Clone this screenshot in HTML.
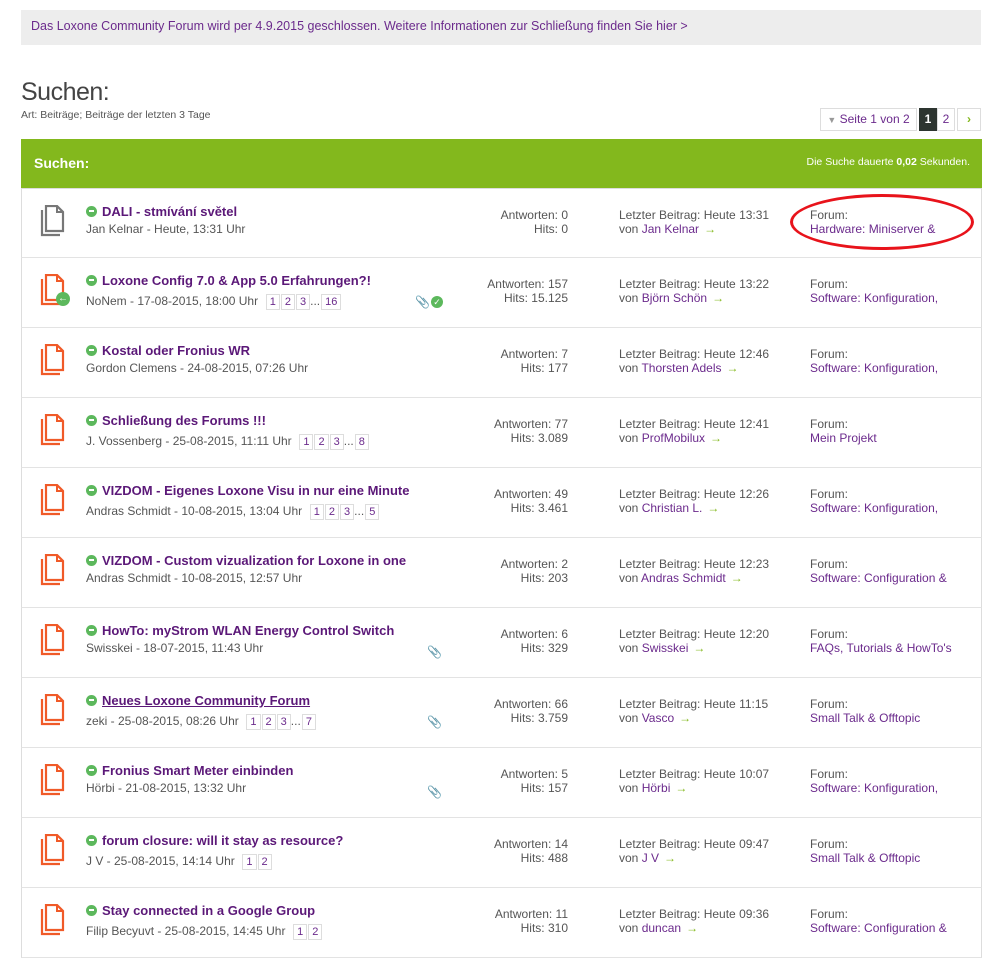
<!DOCTYPE html>
<html><head><meta charset="utf-8"><style>
*{margin:0;padding:0;box-sizing:border-box}
body{width:993px;height:933px;overflow:hidden;background:#fff;font-family:"Liberation Sans",sans-serif;color:#555;font-size:12px;position:relative}
a{color:#6b2a8c;text-decoration:none}
.notice{position:absolute;left:21px;top:10px;width:960px;height:35px;background:#ededed;padding:9px 10px;font-size:12.5px;color:#6b2a8c}
h1{position:absolute;left:21px;top:78px;font-weight:normal;font-size:25px;color:#444;letter-spacing:-0.5px}
.art{position:absolute;left:21px;top:109px;font-size:10.5px;color:#555}
.pager{position:absolute;top:108px;height:23px;border:1px solid #ddd;font-size:12px;line-height:21px;text-align:center}
.bar{position:absolute;left:21px;top:139px;width:961px;height:49px;background:#83b81d;color:#fff}
.bar b{position:absolute;left:13px;top:16px;font-size:14px}
.bar span{position:absolute;right:12px;top:17px;font-size:10.5px}
.row{position:absolute;left:21px;width:961px;height:70px;border-left:1px solid #ddd;border-right:1px solid #ddd;border-bottom:1px solid #e3e3e3}
.ic{position:absolute;left:18px;top:16px}
.t{position:absolute;left:64px;top:15px;font-weight:bold;font-size:13px;color:#5b1878;white-space:nowrap}
.t:before{content:"";display:inline-block;width:11px;height:11px;border-radius:50%;background:#5cb85c linear-gradient(#5cb85c 4px,#fff 4px,#fff 6px,#5cb85c 6px) no-repeat 3px 0/5px 11px;margin-right:5px;vertical-align:-1px}
.m{position:absolute;left:64px;top:33px;font-size:12px;white-space:nowrap}
.pg{display:inline-block;border:1px solid #ddd;font-size:11px;color:#6b2a8c;padding:0 3px;margin-left:1px;line-height:14px}
.st{position:absolute;right:413px;top:19px;text-align:right;font-size:12px;line-height:14px}
.lp{position:absolute;left:597px;top:19px;font-size:12px;line-height:14px;white-space:nowrap}
.arr{color:#83b81d;margin-left:5px}
.fo{position:absolute;left:788px;top:19px;font-size:12px;line-height:14px;white-space:nowrap}
.ex{position:absolute;top:37px}
</style></head><body>
<div class="notice">Das Loxone Community Forum wird per 4.9.2015 geschlossen. Weitere Informationen zur Schließung finden Sie hier &gt;</div>
<h1>Suchen:</h1>
<div class="art">Art: Beiträge; Beiträge der letzten 3 Tage</div>
<div class="pager" style="left:820px;width:97px;color:#6b2a8c"><span style="color:#999;font-size:9px">▼</span> Seite 1 von 2</div>
<div class="pager" style="left:919px;width:18px;background:#2d3530;color:#fff;font-weight:bold;border-color:#2d3530">1</div>
<div class="pager" style="left:937px;width:18px;color:#6b2a8c">2</div>
<div class="pager" style="left:957px;width:24px;color:#83b81d;font-weight:bold">›</div>
<div class="bar"><b>Suchen:</b><span>Die Suche dauerte <b style="position:static;font-size:10.5px">0,02</b> Sekunden.</span></div>

<svg width="0" height="0" style="position:absolute"><defs>
<symbol id="doc" viewBox="0 0 26 32"><path d="M2 5V30H20" fill="none" stroke="currentColor" stroke-width="2.2"/><path d="M6 1H17L23 7V26H6Z" fill="none" stroke="currentColor" stroke-width="2.2"/><path d="M17 1V7H23" fill="none" stroke="currentColor" stroke-width="2"/></symbol>
</defs></svg>

<div style="position:absolute;left:790px;top:194px;width:184px;height:56px;border:3px solid #e8131b;border-radius:50%;z-index:5"></div>

<div class="row" style="top:188px;border-top:1px solid #ddd"><svg class="ic" width="26" height="32" style="color:#777"><use href="#doc"/></svg><div class="t">DALI - stmívání světel</div><div class="m">Jan Kelnar - Heute, 13:31 Uhr</div><div class="st">Antworten: 0<br>Hits: 0</div><div class="lp">Letzter Beitrag: Heute 13:31<br>von <a>Jan Kelnar</a><span class="arr">→</span></div><div class="fo">Forum:<br><a>Hardware: Miniserver &amp;</a></div></div>

<div class="row" style="top:258px"><svg class="ic" width="26" height="32" style="color:#f05a28"><use href="#doc"/></svg><span style="position:absolute;left:34px;top:34px;width:14px;height:14px;border-radius:50%;background:#5cb85c;color:#fff;font-size:10px;line-height:14px;text-align:center;font-weight:bold">←</span><div class="t">Loxone Config 7.0 &amp; App 5.0 Erfahrungen?!</div><div class="m" style="top:36px">NoNem - 17-08-2015, 18:00 Uhr &nbsp;<span class="pg">1</span><span class="pg">2</span><span class="pg">3</span>...<span class="pg">16</span></div><span class="ex" style="left:393px;color:#888">📎</span><span class="ex" style="left:409px;top:38px;width:12px;height:12px;border-radius:50%;background:#5cb85c;color:#fff;font-size:9px;line-height:12px;text-align:center">✓</span><div class="st">Antworten: 157<br>Hits: 15.125</div><div class="lp">Letzter Beitrag: Heute 13:22<br>von <a>Björn Schön</a><span class="arr">→</span></div><div class="fo">Forum:<br><a>Software: Konfiguration,</a></div></div>

<div class="row" style="top:328px"><svg class="ic" width="26" height="32" style="color:#f05a28"><use href="#doc"/></svg><div class="t">Kostal oder Fronius WR</div><div class="m">Gordon Clemens - 24-08-2015, 07:26 Uhr</div><div class="st">Antworten: 7<br>Hits: 177</div><div class="lp">Letzter Beitrag: Heute 12:46<br>von <a>Thorsten Adels</a><span class="arr">→</span></div><div class="fo">Forum:<br><a>Software: Konfiguration,</a></div></div>

<div class="row" style="top:398px"><svg class="ic" width="26" height="32" style="color:#f05a28"><use href="#doc"/></svg><div class="t">Schließung des Forums !!!</div><div class="m" style="top:36px">J. Vossenberg - 25-08-2015, 11:11 Uhr &nbsp;<span class="pg">1</span><span class="pg">2</span><span class="pg">3</span>...<span class="pg">8</span></div><div class="st">Antworten: 77<br>Hits: 3.089</div><div class="lp">Letzter Beitrag: Heute 12:41<br>von <a>ProfMobilux</a><span class="arr">→</span></div><div class="fo">Forum:<br><a>Mein Projekt</a></div></div>

<div class="row" style="top:468px"><svg class="ic" width="26" height="32" style="color:#f05a28"><use href="#doc"/></svg><div class="t">VIZDOM - Eigenes Loxone Visu in nur eine Minute</div><div class="m" style="top:36px">Andras Schmidt - 10-08-2015, 13:04 Uhr &nbsp;<span class="pg">1</span><span class="pg">2</span><span class="pg">3</span>...<span class="pg">5</span></div><div class="st">Antworten: 49<br>Hits: 3.461</div><div class="lp">Letzter Beitrag: Heute 12:26<br>von <a>Christian L.</a><span class="arr">→</span></div><div class="fo">Forum:<br><a>Software: Konfiguration,</a></div></div>

<div class="row" style="top:538px"><svg class="ic" width="26" height="32" style="color:#f05a28"><use href="#doc"/></svg><div class="t">VIZDOM - Custom vizualization for Loxone in one</div><div class="m">Andras Schmidt - 10-08-2015, 12:57 Uhr</div><div class="st">Antworten: 2<br>Hits: 203</div><div class="lp">Letzter Beitrag: Heute 12:23<br>von <a>Andras Schmidt</a><span class="arr">→</span></div><div class="fo">Forum:<br><a>Software: Configuration &amp;</a></div></div>

<div class="row" style="top:608px"><svg class="ic" width="26" height="32" style="color:#f05a28"><use href="#doc"/></svg><div class="t">HowTo: myStrom WLAN Energy Control Switch</div><div class="m">Swisskei - 18-07-2015, 11:43 Uhr</div><span class="ex" style="left:405px;color:#888">📎</span><div class="st">Antworten: 6<br>Hits: 329</div><div class="lp">Letzter Beitrag: Heute 12:20<br>von <a>Swisskei</a><span class="arr">→</span></div><div class="fo">Forum:<br><a>FAQs, Tutorials &amp; HowTo's</a></div></div>

<div class="row" style="top:678px"><svg class="ic" width="26" height="32" style="color:#f05a28"><use href="#doc"/></svg><div class="t" style="text-decoration:underline">Neues Loxone Community Forum</div><div class="m" style="top:36px">zeki - 25-08-2015, 08:26 Uhr &nbsp;<span class="pg">1</span><span class="pg">2</span><span class="pg">3</span>...<span class="pg">7</span></div><span class="ex" style="left:405px;color:#888">📎</span><div class="st">Antworten: 66<br>Hits: 3.759</div><div class="lp">Letzter Beitrag: Heute 11:15<br>von <a>Vasco</a><span class="arr">→</span></div><div class="fo">Forum:<br><a>Small Talk &amp; Offtopic</a></div></div>

<div class="row" style="top:748px"><svg class="ic" width="26" height="32" style="color:#f05a28"><use href="#doc"/></svg><div class="t">Fronius Smart Meter einbinden</div><div class="m">Hörbi - 21-08-2015, 13:32 Uhr</div><span class="ex" style="left:405px;color:#888">📎</span><div class="st">Antworten: 5<br>Hits: 157</div><div class="lp">Letzter Beitrag: Heute 10:07<br>von <a>Hörbi</a><span class="arr">→</span></div><div class="fo">Forum:<br><a>Software: Konfiguration,</a></div></div>

<div class="row" style="top:818px"><svg class="ic" width="26" height="32" style="color:#f05a28"><use href="#doc"/></svg><div class="t">forum closure: will it stay as resource?</div><div class="m" style="top:36px">J V - 25-08-2015, 14:14 Uhr &nbsp;<span class="pg">1</span><span class="pg">2</span></div><div class="st">Antworten: 14<br>Hits: 488</div><div class="lp">Letzter Beitrag: Heute 09:47<br>von <a>J V</a><span class="arr">→</span></div><div class="fo">Forum:<br><a>Small Talk &amp; Offtopic</a></div></div>

<div class="row" style="top:888px"><svg class="ic" width="26" height="32" style="color:#f05a28"><use href="#doc"/></svg><div class="t">Stay connected in a Google Group</div><div class="m" style="top:36px">Filip Becyuvt - 25-08-2015, 14:45 Uhr &nbsp;<span class="pg">1</span><span class="pg">2</span></div><div class="st">Antworten: 11<br>Hits: 310</div><div class="lp">Letzter Beitrag: Heute 09:36<br>von <a>duncan</a><span class="arr">→</span></div><div class="fo">Forum:<br><a>Software: Configuration &amp;</a></div></div>
</body></html>
